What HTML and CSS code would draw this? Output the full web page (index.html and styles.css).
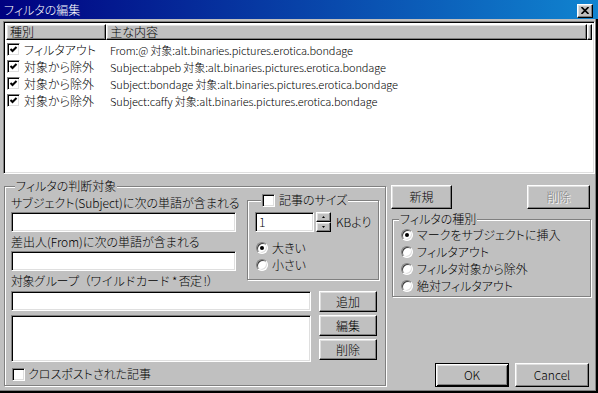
FILE: index.html
```html
<!doctype html>
<html lang="ja">
    <head>
        <meta charset="UTF-8" />
        <meta name="viewport" content="width=device-width, initial-scale=1.0" />
        <title>フィルタの編集</title>
        <link rel="stylesheet" href="styles.css">
    </head>
    <body>
        <div class="window">
            <div class="titlebar">
                <span class="title">フィルタの編集</span>
                <span class="close raised">
                    <svg width="8" height="7" viewBox="0 0 8 7"><path d="M0.5 0 L7.5 7 M7.5 0 L0.5 7" stroke="#000" stroke-width="1.6"/></svg>
                </span>
            </div>
            <div class="client">
                <!-- filter list -->
                <div class="listview sunken">
                    <div class="lv-head">
                        <div class="lv-col col-kind raised">種別</div>
                        <div class="lv-col col-main raised">主な内容</div>
                        <div class="lv-col col-fill raised"></div>
                    </div>
                    <div class="lv-row">
                        <span class="check on"></span><span class="cell-kind">フィルタアウト</span>
                        <span class="cell-main">From:@ 対象:alt.binaries.pictures.erotica.bondage</span>
                    </div>
                    <div class="lv-row">
                        <span class="check on"></span><span class="cell-kind">対象から除外</span>
                        <span class="cell-main">Subject:abpeb 対象:alt.binaries.pictures.erotica.bondage</span>
                    </div>
                    <div class="lv-row">
                        <span class="check on"></span><span class="cell-kind">対象から除外</span>
                        <span class="cell-main">Subject:bondage 対象:alt.binaries.pictures.erotica.bondage</span>
                    </div>
                    <div class="lv-row">
                        <span class="check on"></span><span class="cell-kind">対象から除外</span>
                        <span class="cell-main">Subject:caffy 対象:alt.binaries.pictures.erotica.bondage</span>
                    </div>
                </div>

                <div class="lower">
                    <!-- criteria -->
                    <fieldset class="group criteria">
                        <legend>フィルタの判断対象</legend>
                        <div class="crit-top">
                            <div class="crit-fields">
                                <div class="label">サブジェクト(Subject)に次の単語が含まれる</div>
                                <div class="textbox sunken"></div>
                                <div class="label">差出人(From)に次の単語が含まれる</div>
                                <div class="textbox sunken"></div>
                                <div class="label label-wide">対象グループ（ワイルドカード * 否定 !）</div>
                            </div>
                            <fieldset class="group size">
                                <legend><span class="check"></span>記事のサイズ</legend>
                                <div class="spin-row">
                                    <div class="spin-box sunken">1</div>
                                    <div class="spinner">
                                        <span class="spin-btn raised"><svg width="3" height="2" viewBox="0 0 3 2"><path d="M1.5 0 L3 2 L0 2 Z" fill="#000"/></svg></span>
                                        <span class="spin-btn raised"><svg width="3" height="2" viewBox="0 0 3 2"><path d="M0 0 L3 0 L1.5 2 Z" fill="#000"/></svg></span>
                                    </div>
                                    <span class="spin-unit">KBより</span>
                                </div>
                                <div class="radio-row first"><span class="radio on"></span>大きい</div>
                                <div class="radio-row"><span class="radio"></span>小さい</div>
                            </fieldset>
                        </div>
                        <div class="group-row">
                            <div class="group-inputs">
                                <div class="textbox sunken"></div>
                                <div class="listbox sunken"></div>
                            </div>
                            <div class="group-buttons">
                                <button class="btn raised">追加</button>
                                <button class="btn raised">編集</button>
                                <button class="btn raised">削除</button>
                            </div>
                        </div>
                        <div class="check-row"><span class="check"></span>クロスポストされた記事</div>
                    </fieldset>

                    <!-- right column -->
                    <div class="side">
                        <div class="side-buttons">
                            <button class="btn raised btn-new">新規</button>
                            <button class="btn raised btn-del disabled">削除</button>
                        </div>
                        <fieldset class="group kind">
                            <legend>フィルタの種別</legend>
                            <div class="kind-row"><span class="radio on"></span>マークをサブジェクトに挿入</div>
                            <div class="kind-row"><span class="radio"></span>フィルタアウト</div>
                            <div class="kind-row"><span class="radio"></span>フィルタ対象から除外</div>
                            <div class="kind-row"><span class="radio"></span>絶対フィルタアウト</div>
                        </fieldset>
                        <div class="dialog-buttons">
                            <button class="btn btn-default">OK</button>
                            <button class="btn raised">Cancel</button>
                        </div>
                    </div>
                </div>
            </div>
        </div>
    </body>
</html>
```

FILE: styles.css
```css
body {
    margin: 0;
    background-color: #c0c0c0;
    font-family: "Noto Sans CJK JP", sans-serif;
    font-size: 12px;
    font-weight: 300;
    line-height: 14px;
    font-feature-settings: "palt";
    color: #000;
}
.window {
    width: 598px;
    height: 393px;
    display: flex;
    flex-direction: column;
    overflow: hidden;
}
.titlebar {
    height: 19px;
    flex: none;
    display: flex;
    align-items: center;
    justify-content: space-between;
    padding: 0 5px 0 4px;
    background: linear-gradient(to right, #000080, #1084d0);
}
.title {
    color: #fff;
    font-size: 12px;
}
.close {
    width: 14px;
    height: 12px;
    display: flex;
    align-items: center;
    justify-content: center;
    background-color: #c0c0c0;
    margin-top: 2px;
}
.client {
    flex: 1;
    padding: 2px 1px 4px 3px;
    border-right: 2px solid #000;
    border-bottom: 2px solid #000;
    box-shadow: inset -1px -1px #808080;
    display: flex;
    flex-direction: column;
}

/* 3d borders */
.sunken {
    border: 1px solid;
    border-color: #808080 #fff #fff #808080;
    box-shadow: inset 1px 1px #000, inset -1px -1px #dfdfdf;
    background-color: #fff;
}
.raised {
    border: 1px solid;
    border-color: #fff #000 #000 #fff;
    box-shadow: inset -1px -1px #808080, inset 1px 1px #dfdfdf;
    background-color: #c0c0c0;
}

/* list view */
.listview {
    width: 592px;
    height: 153px;
    box-sizing: border-box;
    padding: 2px;
    flex: none;
}
.lv-head {
    display: flex;
    height: 16px;
}
.lv-col {
    box-sizing: border-box;
    padding-left: 3px;
    line-height: 14px;
}
.col-kind {
    width: 101px;
}
.col-main {
    width: 484px;
}
.col-fill {
    flex: 1;
}
.lv-row {
    display: flex;
    align-items: center;
    height: 17px;
    padding-left: 1px;
}
.lv-head + .lv-row {
    margin-top: 1px;
}
.cell-kind {
    width: 86px;
    margin-left: 4px;
}
.cell-main {
    font-size: 11px;
    letter-spacing: -0.1px;
}

/* checkbox & radio */
.check {
    width: 13px;
    height: 13px;
    box-sizing: border-box;
    flex: none;
    display: inline-block;
    border: 1px solid;
    border-color: #808080 #fff #fff #808080;
    box-shadow: inset 1px 1px #000, inset -1px -1px #dfdfdf;
    background-color: #fff;
    vertical-align: top;
}
.check.on {
    background-image: url("data:image/svg+xml,%3Csvg xmlns='http://www.w3.org/2000/svg' width='11' height='11'%3E%3Cpath d='M2.5 5 L4.5 7 L8.5 3' fill='none' stroke='%23000' stroke-width='2'/%3E%3C/svg%3E");
    background-position: center;
    background-repeat: no-repeat;
}
.radio {
    width: 12px;
    height: 12px;
    box-sizing: border-box;
    flex: none;
    border-radius: 50%;
    border: 1px solid;
    border-color: #808080 #fff #fff #808080;
    box-shadow: inset 1px 1px #404040, inset -1px -1px #dfdfdf;
    background-color: #fff;
    position: relative;
}
.radio.on::after {
    content: "";
    position: absolute;
    left: 3px;
    top: 3px;
    width: 4px;
    height: 4px;
    border-radius: 50%;
    background-color: #000;
}

/* group boxes */
fieldset.group {
    margin: 0;
    border: 1px solid #808080;
    box-shadow: inset 1px 1px #fff, 1px 1px #fff;
    min-width: 0;
}
fieldset.group legend {
    padding: 0 1px;
    background-color: #c0c0c0;
    line-height: 14px;
}
.lower {
    flex: 1;
    display: flex;
}
.criteria {
    width: 382px;
    height: 207px;
    box-sizing: border-box;
    margin-top: 5px !important;
    margin-left: 1px !important;
    padding: 0 6px 0 6px;
}
.criteria > legend {
    margin-left: 4px;
}
.crit-top {
    display: flex;
}
.crit-fields {
    width: 225px;
    padding-top: 3px;
}
.label {
    white-space: nowrap;
}
.label-wide {
    font-feature-settings: normal;
    letter-spacing: -0.6px;
}
.textbox {
    height: 20px;
    box-sizing: border-box;
    margin: 2px 0 3px;
}
.size {
    width: 132px;
    height: 87px;
    box-sizing: border-box;
    margin-left: 11px !important;
    padding: 0 0 0 7px;
}
.size > legend {
    display: flex;
    align-items: center;
    margin-left: 6px;
    gap: 4px;
}
.spin-row {
    display: flex;
    align-items: center;
    margin-top: 5px;
    white-space: nowrap;
}
.spin-box {
    width: 59px;
    height: 20px;
    box-sizing: border-box;
    padding-left: 3px;
    line-height: 18px;
}
.spinner {
    display: flex;
    flex-direction: column;
    margin-left: 2px;
}
.spin-btn {
    width: 15px;
    height: 10px;
    box-sizing: border-box;
    display: flex;
    align-items: center;
    justify-content: center;
}
.spin-unit {
    margin-left: 5px;
}
.radio-row {
    display: flex;
    align-items: center;
    gap: 4px;
    height: 17px;
    margin-left: 1px;
}
.radio-row.first {
    margin-top: 7px;
}
.group-row {
    display: flex;
    margin-top: 3px;
}
.group-inputs {
    width: 300px;
}
.group-inputs .textbox {
    margin: 0;
}
.listbox {
    height: 47px;
    box-sizing: border-box;
    margin-top: 4px;
}
.group-buttons {
    margin-left: 8px;
    display: flex;
    flex-direction: column;
    gap: 3px;
}
.btn {
    font-family: inherit;
    font-size: 12px;
    font-weight: 300;
    font-feature-settings: "palt";
    line-height: 14px;
    padding: 0;
    color: #000;
}
.group-buttons .btn {
    width: 58px;
    height: 21px;
}
.check-row {
    display: flex;
    align-items: center;
    gap: 3px;
    margin-top: 5px;
    margin-left: 1px;
}

/* right column */
.side {
    width: 200px;
    margin-left: 5px;
    margin-top: 11px;
    display: flex;
    flex-direction: column;
}
.side-buttons {
    display: flex;
    justify-content: space-between;
    padding-right: 1px;
}
.btn-new {
    width: 61px;
    height: 24px;
}
.btn-del {
    width: 63px;
    height: 24px;
}
.disabled {
    color: #808080;
    text-shadow: 1px 1px #fff;
}
.kind {
    margin-top: 3px !important;
    margin-left: 1px !important;
    padding: 0 0 2px 8px;
}
.kind > legend {
    margin-left: -2px;
}
.kind-row {
    display: flex;
    align-items: center;
    gap: 4px;
    height: 17px;
}
.dialog-buttons {
    margin-top: auto;
    display: flex;
    justify-content: flex-end;
    gap: 6px;
    padding-right: 2px;
}
.dialog-buttons .btn {
    width: 74px;
    height: 24px;
}
.btn-default {
    border: 1px solid #000;
    background-color: #c0c0c0;
    box-shadow: inset 1px 1px #fff, inset -1px -1px #000, inset 2px 2px #dfdfdf, inset -2px -2px #808080;
}
```
